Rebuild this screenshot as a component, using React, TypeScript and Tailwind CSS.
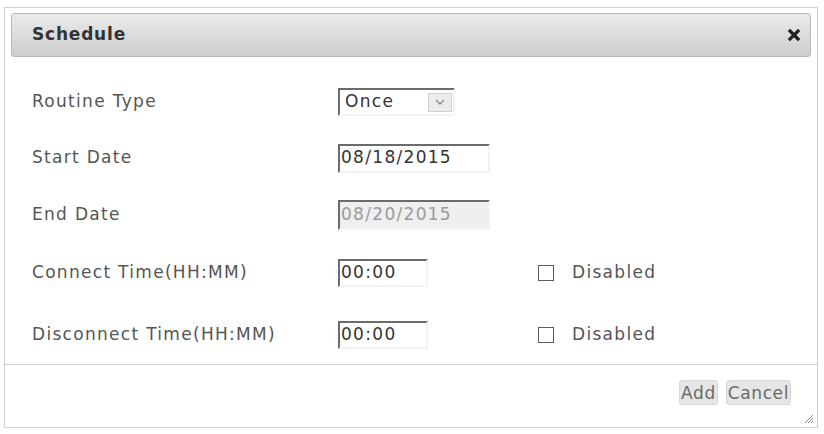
import React from "react";

const font = { fontFamily: '"DejaVu Sans", Verdana, sans-serif' };

const inset = "border-2 border-t-[#6b6b6b] border-l-[#6b6b6b] border-r-[#f2f2f2] border-b-[#f2f2f2]";
const txt = "text-[17px] tracking-[1.3px]";

const Label = ({ children }: { children: React.ReactNode }) => (
  <div className={`w-[306px] shrink-0 ${txt} text-[#555]`}>{children}</div>
);

const DisabledCheck = () => (
  <label className={`ml-[110px] flex items-center gap-[18px] ${txt} text-[#555]`}>
    <span className="block h-4 w-4 border border-[#5a5a5a] bg-white" />
    Disabled
  </label>
);

export default function App() {
  return (
    <div className="h-[434px] w-[824px] bg-white pl-1 pt-[7px]" style={font}>
      <div className="flex h-[421px] w-[814px] flex-col border border-[#cfcfcf] bg-white">
        {/* title bar */}
        <div className="mx-[6px] mt-[5px] flex h-[44px] items-center justify-between rounded-[3px] border border-[#b9b9b9] bg-gradient-to-b from-[#ebebeb] to-[#cdcdcd] pl-[20px] pr-[9px]">
          <span className="text-[17px] font-bold tracking-[0.8px] text-[#333]">Schedule</span>
          <svg width="14" height="14" viewBox="0 0 14 14">
            <path d="M3 3 L11 11 M11 3 L3 11" stroke="#222" strokeWidth="3.2" strokeLinecap="square" />
          </svg>
        </div>

        {/* form rows */}
        <div className="flex flex-col pl-[27px] pt-[17px]">
          <div className="flex h-[56px] items-center">
            <Label>Routine Type</Label>
            <div className={`flex h-[28px] w-[117px] items-center justify-between bg-white pl-[5px] pr-[1px] ${inset}`}>
              <span className={`${txt} text-[#333]`}>Once</span>
              <span className="flex h-[19px] w-[24px] items-center justify-center border border-[#d0d0d0] bg-[#ececec]">
                <svg width="10" height="6" viewBox="0 0 10 6">
                  <path d="M1 1 L5 5 L9 1" fill="none" stroke="#8a8a8a" strokeWidth="1.4" />
                </svg>
              </span>
            </div>
          </div>

          <div className="flex h-[56px] items-center">
            <Label>Start Date</Label>
            <div className={`flex h-[29px] w-[152px] items-center bg-white pl-[1px] ${txt} text-[#333] ${inset}`}>08/18/2015</div>
          </div>

          <div className="flex h-[57px] items-center">
            <Label>End Date</Label>
            <div className={`flex h-[30px] w-[152px] items-center bg-[#efefef] pl-[1px] ${txt} text-[#9a9a9a] ${inset}`}>08/20/2015</div>
          </div>

          <div className="flex h-[59px] items-center">
            <Label>Connect Time(HH:MM)</Label>
            <div className={`flex h-[28px] w-[90px] items-center bg-white pl-[1px] ${txt} text-[#333] ${inset}`}>00:00</div>
            <DisabledCheck />
          </div>

          <div className="flex h-[62px] items-center pt-[3px]">
            <Label>Disconnect Time(HH:MM)</Label>
            <div className={`flex h-[28px] w-[90px] items-center bg-white pl-[1px] ${txt} text-[#333] ${inset}`}>00:00</div>
            <DisabledCheck />
          </div>
        </div>

        {/* footer */}
        <div className="relative flex flex-1 items-start justify-end gap-[8px] border-t border-[#d6d6d6] pr-[26px] pt-[15px]">
          <button className="h-[25px] rounded-[3px] border border-[#d8d8d8] bg-[#e6e6e6] px-[1px] text-[17px] tracking-[0.6px] text-[#6a6a6a]">Add</button>
          <button className="h-[25px] rounded-[3px] border border-[#d8d8d8] bg-[#e6e6e6] px-[1px] text-[17px] tracking-[0.6px] text-[#6a6a6a]">Cancel</button>
          <svg className="absolute bottom-[3px] right-[3px]" width="11" height="11" viewBox="0 0 11 11">
            <path d="M10 2 L2 10 M10 5 L5 10 M10 8 L8 10" stroke="#8a8a8a" strokeWidth="1" />
          </svg>
        </div>
      </div>
    </div>
  );
}
